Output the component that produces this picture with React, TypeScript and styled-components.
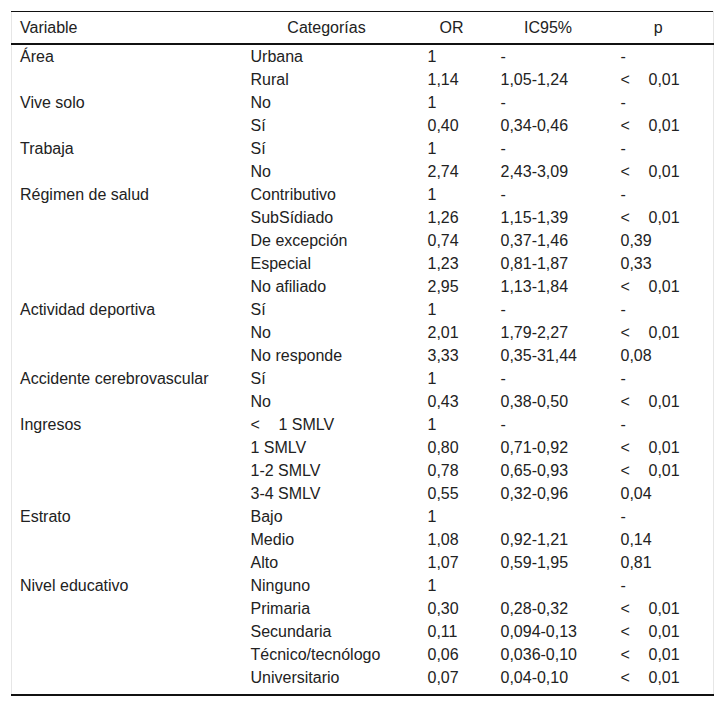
import styled, { createGlobalStyle } from "styled-components";

const GlobalStyle = createGlobalStyle`
  html, body {
    margin: 0;
    background: #fff;
  }
  body {
    font-family: "Liberation Sans", Arial, sans-serif;
    color: #222;
  }
`;

const Page = styled.div`
  padding: 11px 12px 0 11px;
`;

const Table = styled.table`
  width: 702px;
  border-collapse: collapse;
  table-layout: fixed;
  font-size: 16px;
  border-left: 1px solid #e6e6e6;
  border-right: 1px solid #e6e6e6;
  border-top: 1px solid #111;
  border-bottom: 2px solid #111;
`;

const HeadCell = styled.th<{ $left?: boolean }>`
  font-weight: normal;
  text-align: ${(p) => (p.$left ? "left" : "center")};
  padding: 0 ${(p) => (p.$left ? "8px" : "17px")} 0 8px;
  height: 31px;
  line-height: 19px;
  border-bottom: 2px solid #111;
  vertical-align: middle;
`;

const Row = styled.tr<{ $last?: boolean }>`
  td {
    padding-bottom: ${(p) => (p.$last ? "7px" : "2px")};
  }
`;

const Cell = styled.td`
  padding: 2px 8px;
  line-height: 19px;
  text-align: left;
  vertical-align: top;
  white-space: nowrap;
`;

const Lt = styled.span`
  display: inline-block;
  width: 28px;
`;

type Line = [string, string, string, string];

const groups: { name: string; rows: Line[] }[] = [
  {
    name: "Área",
    rows: [
      ["Urbana", "1", "-", "-"],
      ["Rural", "1,14", "1,05-1,24", "<0,01"],
    ],
  },
  {
    name: "Vive solo",
    rows: [
      ["No", "1", "-", "-"],
      ["Sí", "0,40", "0,34-0,46", "<0,01"],
    ],
  },
  {
    name: "Trabaja",
    rows: [
      ["Sí", "1", "-", "-"],
      ["No", "2,74", "2,43-3,09", "<0,01"],
    ],
  },
  {
    name: "Régimen de salud",
    rows: [
      ["Contributivo", "1", "-", "-"],
      ["SubSídiado", "1,26", "1,15-1,39", "<0,01"],
      ["De excepción", "0,74", "0,37-1,46", "0,39"],
      ["Especial", "1,23", "0,81-1,87", "0,33"],
      ["No afiliado", "2,95", "1,13-1,84", "<0,01"],
    ],
  },
  {
    name: "Actividad deportiva",
    rows: [
      ["Sí", "1", "-", "-"],
      ["No", "2,01", "1,79-2,27", "<0,01"],
      ["No responde", "3,33", "0,35-31,44", "0,08"],
    ],
  },
  {
    name: "Accidente cerebrovascular",
    rows: [
      ["Sí", "1", "-", "-"],
      ["No", "0,43", "0,38-0,50", "<0,01"],
    ],
  },
  {
    name: "Ingresos",
    rows: [
      ["<1 SMLV", "1", "-", "-"],
      ["1 SMLV", "0,80", "0,71-0,92", "<0,01"],
      ["1-2 SMLV", "0,78", "0,65-0,93", "<0,01"],
      ["3-4 SMLV", "0,55", "0,32-0,96", "0,04"],
    ],
  },
  {
    name: "Estrato",
    rows: [
      ["Bajo", "1", "", "-"],
      ["Medio", "1,08", "0,92-1,21", "0,14"],
      ["Alto", "1,07", "0,59-1,95", "0,81"],
    ],
  },
  {
    name: "Nivel educativo",
    rows: [
      ["Ninguno", "1", "", "-"],
      ["Primaria", "0,30", "0,28-0,32", "<0,01"],
      ["Secundaria", "0,11", "0,094-0,13", "<0,01"],
      ["Técnico/tecnólogo", "0,06", "0,036-0,10", "<0,01"],
      ["Universitario", "0,07", "0,04-0,10", "<0,01"],
    ],
  },
];

// "<" is printed with a wide gap before the value
function Value({ text }: { text: string }) {
  if (text.startsWith("<")) {
    return (
      <>
        <Lt>&lt;</Lt>
        {text.slice(1)}
      </>
    );
  }
  return <>{text}</>;
}

export default function App() {
  return (
    <Page>
      <GlobalStyle />
      <Table>
        <colgroup>
          <col style={{ width: 231 }} />
          <col style={{ width: 177 }} />
          <col style={{ width: 73 }} />
          <col style={{ width: 120 }} />
          <col style={{ width: 101 }} />
        </colgroup>
        <thead>
          <tr>
            <HeadCell $left>Variable</HeadCell>
            <HeadCell>Categorías</HeadCell>
            <HeadCell>OR</HeadCell>
            <HeadCell>IC95%</HeadCell>
            <HeadCell>p</HeadCell>
          </tr>
        </thead>
        <tbody>
          {groups.map((g, gi) =>
            g.rows.map((r, ri) => (
              <Row
                key={g.name + ri}
                $last={gi === groups.length - 1 && ri === g.rows.length - 1}
              >
                <Cell>{ri === 0 ? g.name : ""}</Cell>
                <Cell>
                  <Value text={r[0]} />
                </Cell>
                <Cell>{r[1]}</Cell>
                <Cell>{r[2]}</Cell>
                <Cell>
                  <Value text={r[3]} />
                </Cell>
              </Row>
            ))
          )}
        </tbody>
      </Table>
    </Page>
  );
}
